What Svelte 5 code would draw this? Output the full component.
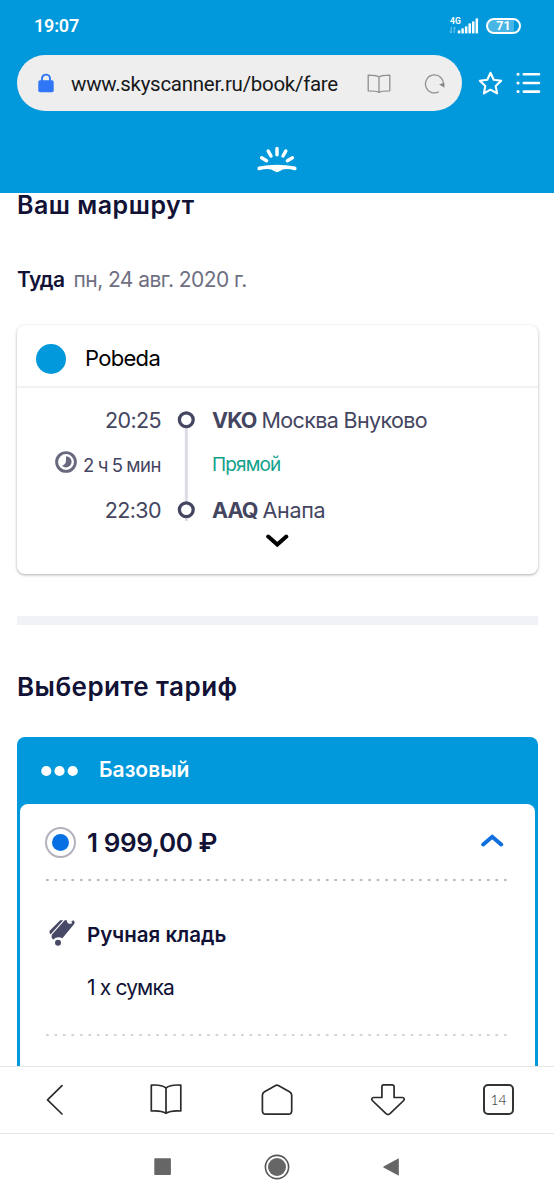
<script>
  const signalBars = [3, 5, 7, 10, 12, 15];
</script>

<div class="screen">
  <header>
    <div class="status">
      <span class="time">19:07</span>
      <div class="indicators">
        <div class="network">
          <span class="gen">4G</span>
          <svg width="8" height="8" viewBox="0 0 8 8"><path d="M2.2 1v6M.8 5.4 2.2 7M5.2 7V1l1.4 1.6" fill="none" stroke="#8fd0ef" stroke-width=".9" /></svg>
        </div>
        <svg class="bars" width="22" height="16" viewBox="0 0 22 16">
          {#each signalBars as h, i}
            <rect x={0.8 + i * 3.55} y={15.4 - h} width="2.5" height={h} fill="#fff" />
          {/each}
        </svg>
        <div class="battery"><span>71</span></div>
      </div>
    </div>
    <div class="toolbar">
      <div class="address">
        <svg class="lock" width="16" height="20" viewBox="0 0 16 20"><path d="M4 8V5.6a4 4 0 0 1 8 0V8" fill="none" stroke="#2f76f6" stroke-width="1.9" /><rect x=".3" y="7.2" width="15.4" height="12" rx="1.8" fill="#2f76f6" /></svg>
        <span class="url">www.skyscanner.ru/book/fare</span>
        <svg class="reader" width="24" height="20" viewBox="0 0 24 20"><path d="M12 3C9.5 1.2 5.500 1.200 1.200 1.200V16.800C5.500 16.800 9.500 16.800 12 18.400C14.500 16.800 18.500 16.800 22.800 16.800V1.200C18.500 1.200 14.500 1.200 12 3ZM12 3V18.400" fill="none" stroke="#8f8f8f" stroke-width="1.3" stroke-linejoin="round" /></svg>
        <svg class="reload" width="22" height="22" viewBox="0 0 22 22"><path d="M14.800 18.800A9 9 0 1 1 19.400 11.800" fill="none" stroke="#8f8f8f" stroke-width="1.3" /><path d="M15 11.200 20.400 10v4.800Z" fill="#858585" /></svg>
      </div>
      <svg class="star" width="25" height="25" viewBox="0 0 25 25"><path d="m12.500 1.800 3.200 6.900 7.500 1-5.500 5.200 1.400 7.500-6.600-3.700-6.600 3.700 1.400-7.500L1.800 9.700l7.500-1Z" fill="none" stroke="#fff" stroke-width="2.100" stroke-linejoin="round" /></svg>
      <svg class="menu" width="25" height="22" viewBox="0 0 25 22"><g stroke="#fff" stroke-width="2.600" stroke-linecap="round"><path d="M7.800 2.300H23M7.800 11H23M7.800 19.600H23" /><path d="M2 2.300h.1M2 11h.1M2 19.600h.1" stroke-width="3" /></g></svg>
    </div>
    <div class="brand">
      <svg width="40" height="27" viewBox="0 0 40 27">
        <g stroke="#fff" stroke-width="3.500" stroke-linecap="round"><path d="M20 2.500v6.300M11.200 5l2.800 5M28.800 5 26 10M4.600 11.800l5 2.900M35.400 11.800l-5 2.900" /></g>
        <path d="M1.800 20.600Q20 17 38.200 20.600Q39.800 21 39.500 23.200Q39.200 24.600 37.500 24.200Q31 22.600 27 23.300C24 23.800 23 25.800 20 26.200C17 25.800 16 23.800 13 23.300Q9 22.600 2.500 24.200Q.8 24.600 .5 23.200Q.2 21 1.800 20.600Z" fill="#fff" />
      </svg>
    </div>
  </header>

  <main>
    <h2 class="route-title">Ваш маршрут</h2>
    <div class="date"><b>Туда</b><span>пн, 24 авг. 2020 г.</span></div>

    <section class="card">
      <div class="airline"><i></i><span>Pobeda</span></div>
      <div class="legs">
        <div class="times">
          <span class="t">20:25</span>
          <span class="duration">
            <svg width="22" height="22" viewBox="0 0 22 22"><circle cx="11" cy="11" r="9.400" fill="none" stroke="#68697f" stroke-width="2.900" /><path d="M11 5.200A5.600 5.600 0 0 1 11 16.400Q8.800 16.400 7.200 14.800Q11 13.200 11 9.500Z" fill="#68697f" /></svg>
            <span>2 ч 5 мин</span>
          </span>
          <span class="t">22:30</span>
        </div>
        <svg class="track" width="18" height="112" viewBox="0 0 18 112"><path d="M9.300 16v95" stroke="#dcdbe6" stroke-width="3" /><g fill="#fff" stroke="#444560" stroke-width="3.300"><circle cx="9.300" cy="9.700" r="6.900" /><circle cx="9.300" cy="99.700" r="6.900" /></g></svg>
        <div class="stops">
          <span class="s"><b>VKO</b><span class="city1">Москва Внуково</span></span>
          <span class="direct">Прямой</span>
          <span class="s"><b>AAQ</b><span class="city2">Анапа</span></span>
        </div>
      </div>
      <svg class="expand" width="24" height="16" viewBox="0 0 24 16"><path d="m3.200 3.600 9.100 7.900 9-7.900" fill="none" stroke="#000" stroke-width="4" stroke-linecap="round" /></svg>
    </section>

    <div class="separator"></div>
    <h2 class="fare-title">Выберите тариф</h2>

    <section class="fare">
      <div class="fare-head">
        <svg width="37" height="12" viewBox="0 0 37 12"><g fill="#fff"><circle cx="5.300" cy="6" r="5.100" /><circle cx="18.500" cy="6" r="5.100" /><circle cx="31.700" cy="6" r="5.100" /></g></svg>
        <span>Базовый</span>
      </div>
      <div class="fare-body">
        <div class="price-row">
          <span class="radio"><i></i></span>
          <span class="price">1 999,00 ₽</span>
          <svg width="24" height="16" viewBox="0 0 24 16"><path d="m3.200 11.500 9-7.700 9 7.700" fill="none" stroke="#0f6fdc" stroke-width="4" stroke-linecap="round" /></svg>
        </div>
        <svg class="dashes" width="462" height="2" viewBox="0 0 462 2"><path d="M0 1h461" stroke="#a2a2aa" stroke-width="1.300" stroke-dasharray="2.700 5.780" /></svg>
        <div class="bag-row">
          <svg width="27" height="28" viewBox="0 0 27 28">
            <path d="M11.200 1.200H14.200L1.500 15.400Q-.5 13.200 1.200 11.300Z" fill="#484966" />
            <path d="M15.700 1.200H17.900Q17.600 3.600 19.400 4.600Q21.600 5.300 23.200 4L22.200 2.400L24.600 1.200Q26.400 3.200 25.200 5L13.400 19.200Q12 18.400 9 18.300Q5.500 18.400 4.400 20.700Q1.600 18.800 3 15.600Z" fill="#484966" />
            <circle cx="9" cy="23.700" r="3" fill="#484966" />
          </svg>
          <span>Ручная кладь</span>
        </div>
        <p>1 x сумка</p>
        <svg class="dashes" width="462" height="2" viewBox="0 0 462 2"><path d="M0 1h461" stroke="#c6c6ca" stroke-width="1.500" stroke-dasharray="2.700 5.780" /></svg>
      </div>
    </section>
  </main>

  <nav class="browser">
    <span><svg width="34" height="34" viewBox="0 0 34 34"><path d="M24 2.600 9.500 16.900 24 31" /></svg></span>
    <span><svg width="34" height="34" viewBox="0 0 34 34"><path d="M17 5Q12 1.300 2.300 2.200V28Q12 27.200 17 30.300Q22 27.200 31.800 28V2.200Q22 1.300 17 5ZM17 5V30" /></svg></span>
    <span><svg width="34" height="34" viewBox="0 0 34 34"><path d="M15.200 2.700Q17 1.700 18.800 2.700L29.500 8.800Q31.700 10 31.700 12.300V27.800Q31.700 31.200 28.300 31.200H5.800Q2.400 31.200 2.400 27.800V12.300Q2.400 10 4.500 8.800Z" /></svg></span>
    <span><svg width="36" height="34" viewBox="0 0 36 34"><path d="M13.500 1.900H22Q24.100 1.900 24.100 4V14.500H32.500Q35.200 15.200 33.700 17.500L20 30.700Q18 32.500 16 30.700L2.300 17.500Q.8 15.200 3.500 14.500H11.900V4Q11.900 1.900 13.500 1.900Z" /></svg></span>
    <span><span class="tabs">14</span></span>
  </nav>
  <nav class="system">
    <svg width="18" height="18" viewBox="0 0 18 18"><rect x=".3" y=".3" width="16.600" height="16.800" rx=".8" fill="#666" /></svg>
    <svg width="26" height="26" viewBox="0 0 26 26"><circle cx="13" cy="13" r="11.600" fill="none" stroke="#555" stroke-width="1.600" /><circle cx="13" cy="13" r="9" fill="#666" /></svg>
    <svg width="18" height="20" viewBox="0 0 18 20"><path d="M16.800 1.300v17.400L1.500 10.500Q.9 10 1.500 9.500Z" fill="#666" /></svg>
  </nav>
</div>

<style>
  :global(body) { background: #fff; }
  .screen { width: 554px; height: 1200px; display: flex; flex-direction: column; background: #fff; font-family: Inter, "Noto Sans", sans-serif; color: #111236; white-space: nowrap; }
  svg { display: block; flex: none; }
  i { display: block; }
  header { height: 193px; flex: none; background: #0199db; font-family: Roboto, sans-serif; }
  .status { height: 51px; padding: 0 33px 0 34px; display: flex; justify-content: space-between; align-items: center; color: #fff; }
  .time { font-size: 18px; font-weight: 600; letter-spacing: -.2px; }
  .indicators { display: flex; align-items: center; }
  .network { display: flex; flex-direction: column; width: 8px; }
  .gen { font-size: 8.500px; font-weight: 700; line-height: 9px; margin-left: 1px; }
  .bars { margin-right: 7px; }
  .battery { width: 31px; height: 12px; border: 2px solid #fff; border-radius: 8px; background: linear-gradient(90deg, #49b5e5 0 85%, transparent 85%); display: flex; justify-content: center; align-items: center; font-size: 12.500px; font-weight: 700; line-height: 12px; }
  .toolbar { height: 64px; padding: 4px 13px 0 17px; display: flex; align-items: flex-start; box-sizing: border-box; }
  .address { width: 445px; height: 56px; flex: none; border-radius: 28px; background: #eee; display: flex; align-items: center; box-sizing: border-box; padding-left: 21px; }
  .lock { margin-top: -1px; }
  .url { margin-left: 17px; width: 279px; font-size: 20.500px; color: #16181a; letter-spacing: -.28px; line-height: 56px; padding-top: 2px; }
  .reader { margin-left: 17px; margin-top: 1px; }
  .reload { margin-left: 33px; margin-top: 1px; }
  .star { margin: 16px 0 0 16px; }
  .menu { margin: 17px 0 0 13px; }
  .brand { height: 78px; padding-top: 31px; display: flex; justify-content: center; box-sizing: border-box; align-items: flex-start; }

  main { height: 873px; flex: none; padding: 0 16px 0 17px; box-sizing: border-box; }
  h2 { margin: 0; font-weight: 600; font-size: 25px; line-height: 24px; }
  .route-title { letter-spacing: .5px; }
  .date { margin-top: 50px; height: 24px; line-height: 25px; font-size: 21px; display: flex; gap: 9px; color: #6e6f82; letter-spacing: -.57px; }
  .date b { font-weight: 600; color: #111236; }
  .card { margin-top: 34px; height: 249px; border-radius: 8px; box-shadow: 0 1px 3px rgba(0, 0, 0, .32); }
  .airline { height: 63px; padding: 4px 19px 0; display: flex; align-items: center; border-bottom: 2px solid #f2f2f5; box-sizing: border-box; font-size: 22px; color: #000; }
  .airline i { width: 30px; height: 30px; margin-top: 2px; border-radius: 50%; background: #0199db; }
  .airline span { margin-left: 19px; letter-spacing: -.7px; }
  .legs { display: flex; height: 134px; padding-top: 16px; box-sizing: border-box; color: #444560; }
  .times { width: 144px; display: flex; flex-direction: column; align-items: flex-end; }
  .t, .s { font-size: 21.500px; line-height: 32px; height: 32px; flex: none; }
  .t { letter-spacing: -.6px; }
  .duration { height: 58px; flex: none; display: flex; align-items: center; gap: 6px; font-size: 18.500px; letter-spacing: -.45px; word-spacing: -1px; }
  .duration svg { margin-top: -6px; }
  .duration span { margin-top: -1px; }
  .track { margin: 6px 0 0 16px; }
  .stops { margin-left: 17px; display: flex; flex-direction: column; }
  .s { display: flex; gap: 5px; }
  .s b { font-weight: 700; letter-spacing: -.9px; }
  .city1 { letter-spacing: -.65px; }
  .city2 { letter-spacing: -.3px; }
  .direct { height: 58px; flex: none; line-height: 57px; font-size: 19px; letter-spacing: -.85px; color: #10a18b; }
  .expand { margin: 11px 0 0 248px; }
  .separator { margin-top: 42px; height: 9px; background: #f1f2f8; }
  .fare-title { margin-top: 50px; font-size: 26px; letter-spacing: .45px; }
  .fare { margin-top: 38px; height: 329px; border-radius: 8px 8px 0 0; background: #0199db; padding: 0 3px; }
  .fare-head { height: 67px; display: flex; align-items: center; padding: 0 0 2px 21px; box-sizing: border-box; color: #fff; font-weight: 600; font-size: 21px; }
  .fare-head svg { margin-top: 3px; }
  .fare-head span { margin-left: 21px; }
  .fare-body { height: 262px; background: #fff; border-radius: 8px 8px 0 0; padding: 0 26px; }
  .price-row { height: 75px; padding-top: 2px; box-sizing: border-box; display: flex; align-items: center; }
  .radio { width: 27px; height: 27px; border: 2px solid #b2b1bd; border-radius: 50%; display: grid; place-items: center; margin-left: -1px; }
  .radio i { width: 17px; height: 17px; border-radius: 50%; background: #0770e3; }
  .price { flex: 1; margin-left: 11px; font-size: 26px; font-weight: 600; line-height: 32px; letter-spacing: -.4px; }
  .price-row svg { margin: -4px 5px 0 0; }
  .dashes { width: 462px; }
  .bag-row { margin-top: 38px; height: 30px; display: flex; align-items: center; font-size: 20.500px; font-weight: 600; }
  .bag-row svg { margin-left: 3px; margin-top: -2px; }
  .bag-row span { margin-left: 11px; }
  p { margin: 27px 0 0 41px; font-size: 21px; line-height: 24px; height: 24px; letter-spacing: -.85px; }
  p + .dashes { margin-top: 34px; }

  .browser { height: 67px; flex: none; border-top: 1px solid #e6e6e6; box-sizing: border-box; display: grid; grid-template-columns: repeat(5, 1fr); justify-items: center; align-items: center; background: #fff; }
  .browser svg { fill: none; stroke: #2b2b2b; stroke-width: 1.700; stroke-linejoin: round; stroke-linecap: round; }
  .tabs { display: block; width: 27px; height: 27px; margin-top: -1px; border: 2px solid #333; border-radius: 5px; font: 300 14px/27px Lato, sans-serif; text-align: center; color: #111; }
  .system { height: 67px; flex: none; border-top: 1px solid #e6e6e6; box-sizing: border-box; padding: 0 154px; display: flex; justify-content: space-between; align-items: center; }
</style>
